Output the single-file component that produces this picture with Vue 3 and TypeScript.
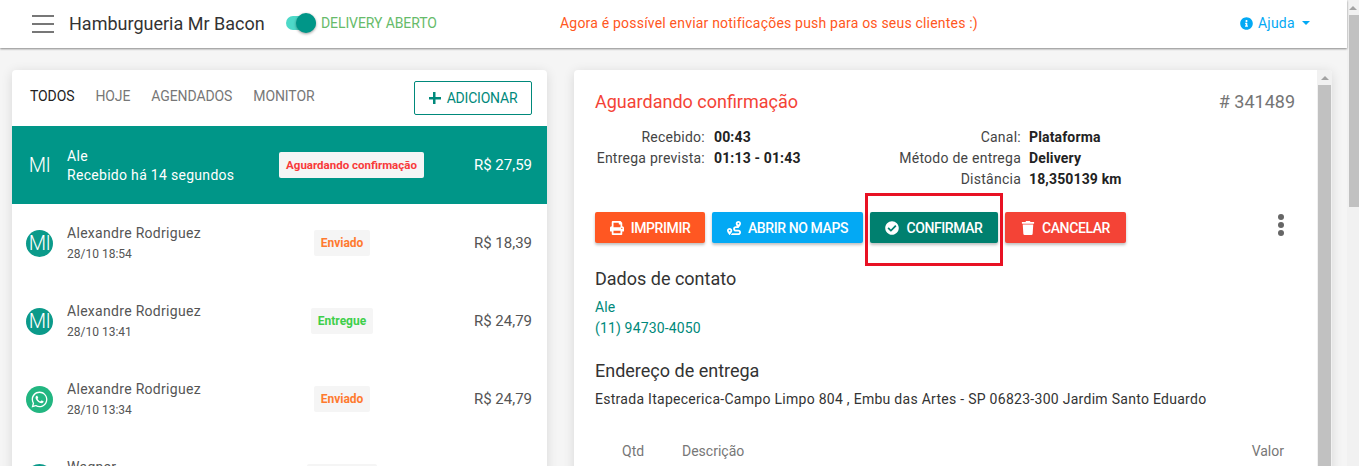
<script setup lang="ts">
interface Pedido {
  nome: string
  info: string
  status: string
  cor: string
  valor: string
  origem: 'mi' | 'whatsapp'
}

const tabs = ['TODOS', 'HOJE', 'AGENDADOS', 'MONITOR']

const pedidos: Pedido[] = [
  { nome: 'Alexandre Rodriguez', info: '28/10 18:54', status: 'Enviado', cor: '#ff7a2f', valor: 'R$ 18,39', origem: 'mi' },
  { nome: 'Alexandre Rodriguez', info: '28/10 13:41', status: 'Entregue', cor: '#3ecf4a', valor: 'R$ 24,79', origem: 'mi' },
  { nome: 'Alexandre Rodriguez', info: '28/10 13:34', status: 'Enviado', cor: '#ff7a2f', valor: 'R$ 24,79', origem: 'whatsapp' },
  { nome: 'Wagner', info: '28/10 13:20', status: 'Cancelado', cor: '#f44336', valor: 'R$ 31,90', origem: 'mi' },
]

const whatsapp = 'M12.04 2C6.58 2 2.13 6.45 2.13 11.91C2.13 13.66 2.59 15.36 3.45 16.86L2.05 22L7.3 20.62C8.75 21.41 10.38 21.83 12.04 21.83C17.5 21.83 21.95 17.38 21.95 11.92C21.95 9.27 20.92 6.78 19.05 4.91C17.18 3.03 14.69 2 12.04 2M12.05 3.67C14.25 3.67 16.31 4.53 17.87 6.09C19.42 7.65 20.28 9.72 20.28 11.92C20.28 16.46 16.58 20.15 12.04 20.15C10.56 20.15 9.11 19.76 7.85 19L7.55 18.83L4.43 19.65L5.26 16.61L5.06 16.29C4.24 15 3.8 13.47 3.8 11.91C3.81 7.37 7.5 3.67 12.05 3.67M8.53 7.33C8.37 7.33 8.1 7.39 7.87 7.64C7.65 7.89 7 8.5 7 9.71C7 10.93 7.89 12.1 8 12.27C8.14 12.44 9.76 14.94 12.25 16C12.84 16.27 13.3 16.42 13.66 16.53C14.25 16.72 14.79 16.69 15.22 16.63C15.7 16.56 16.68 16.03 16.89 15.45C17.1 14.87 17.1 14.38 17.04 14.27C16.97 14.17 16.81 14.11 16.56 14C16.31 13.86 15.09 13.26 14.87 13.18C14.64 13.1 14.5 13.06 14.31 13.3C14.15 13.55 13.67 14.11 13.53 14.27C13.38 14.44 13.24 14.46 13 14.34C12.74 14.21 11.94 13.95 11 13.11C10.26 12.45 9.77 11.64 9.62 11.39C9.5 11.15 9.61 11 9.73 10.89C9.84 10.78 10 10.6 10.1 10.45C10.23 10.31 10.27 10.2 10.35 10.04C10.43 9.87 10.39 9.73 10.33 9.61C10.27 9.5 9.77 8.26 9.56 7.77C9.36 7.29 9.16 7.35 9 7.34C8.86 7.34 8.7 7.33 8.53 7.33Z'
</script>

<template>
  <div class="app">
    <div class="page">
      <header class="topbar">
        <div class="burger"><span></span><span></span><span></span></div>
        <div class="store">Hamburgueria Mr Bacon</div>
        <div class="switch"><span class="switch-thumb"></span></div>
        <div class="delivery">DELIVERY ABERTO</div>
        <div class="notice">Agora é possível enviar notificações push para os seus clientes :)</div>
        <div class="help">
          <svg class="help-icon" viewBox="0 0 512 512"><path fill="currentColor" d="M256 8C119.043 8 8 119.083 8 256c0 136.997 111.043 248 248 248s248-111.003 248-248C504 119.083 392.957 8 256 8zm0 110c23.196 0 42 18.804 42 42s-18.804 42-42 42-42-18.804-42-42 18.804-42 42-42zm56 254c0 6.627-5.373 12-12 12h-88c-6.627 0-12-5.373-12-12v-24c0-6.627 5.373-12 12-12h12v-64h-12c-6.627 0-12-5.373-12-12v-24c0-6.627 5.373-12 12-12h64c6.627 0 12 5.373 12 12v100h12c6.627 0 12 5.373 12 12v24z"/></svg>
          <span>Ajuda</span>
          <span class="caret"></span>
        </div>
      </header>

      <main class="content">
        <section class="card list">
          <div class="tabs">
            <span v-for="(t, i) in tabs" :key="t" class="tab" :class="{ active: i === 0 }">{{ t }}</span>
            <button class="add"><span class="plus"></span>ADICIONAR</button>
          </div>

          <div class="row selected">
            <div class="avatar plain">MI</div>
            <div class="who">
              <div class="name">Ale</div>
              <div class="when">Recebido há 14 segundos</div>
            </div>
            <div class="status"><span class="badge waiting">Aguardando confirmação</span></div>
            <div class="price">R$ 27,59</div>
          </div>

          <div v-for="p in pedidos" :key="p.info" class="row">
            <div v-if="p.origem === 'mi'" class="avatar">MI</div>
            <div v-else class="avatar wa">
              <svg viewBox="0 0 24 24" width="19" height="19"><path fill="#fff" :d="whatsapp"/></svg>
            </div>
            <div class="who">
              <div class="name">{{ p.nome }}</div>
              <div class="date">{{ p.info }}</div>
            </div>
            <div class="status"><span class="badge" :style="{ color: p.cor }">{{ p.status }}</span></div>
            <div class="price">{{ p.valor }}</div>
          </div>
        </section>

        <section class="card detail">
          <div class="detail-body">
            <div class="detail-head">
              <div class="state">Aguardando confirmação</div>
              <div class="number"># 341489</div>
            </div>

            <div class="facts">
              <dl class="facts-col left">
                <dt>Recebido:</dt><dd>00:43</dd>
                <dt>Entrega prevista:</dt><dd>01:13 - 01:43</dd>
              </dl>
              <dl class="facts-col right">
                <dt>Canal:</dt><dd>Plataforma</dd>
                <dt>Método de entrega</dt><dd>Delivery</dd>
                <dt>Distância</dt><dd>18,350139 km</dd>
              </dl>
            </div>

            <div class="actions">
              <button class="btn orange">
                <svg viewBox="0 0 512 512"><path fill="currentColor" d="M448 192V77.25c0-8.49-3.37-16.62-9.37-22.63L393.37 9.37c-6-6-14.14-9.37-22.63-9.37H96C78.33 0 64 14.33 64 32v160c-35.35 0-64 28.65-64 64v112c0 8.84 7.16 16 16 16h48v96c0 17.67 14.33 32 32 32h320c17.67 0 32-14.33 32-32v-96h48c8.84 0 16-7.16 16-16V256c0-35.35-28.65-64-64-64zm-64 256H128v-96h256v96zm0-224H128V64h192v48c0 8.84 7.16 16 16 16h48v96zm48 72c-13.25 0-24-10.75-24-24 0-13.26 10.75-24 24-24s24 10.74 24 24c0 13.25-10.75 24-24 24z"/></svg>
                IMPRIMIR
              </button>
              <button class="btn blue">
                <svg viewBox="0 0 512 512"><path fill="currentColor" d="M416 320h-96c-17.6 0-32-14.4-32-32s14.4-32 32-32h96s96-107 96-160-43-96-96-96-96 43-96 96c0 25.5 22.2 63.4 45.3 96H320c-52.9 0-96 43.1-96 96s43.1 96 96 96h96c17.6 0 32 14.4 32 32s-14.4 32-32 32H185.5c-16 24.8-33.8 47.7-47.3 64H416c52.9 0 96-43.1 96-96s-43.1-96-96-96zm0-256c17.7 0 32 14.3 32 32s-14.3 32-32 32-32-14.3-32-32 14.3-32 32-32zM96 256c-53 0-96 43-96 96s96 160 96 160 96-107 96-160-43-96-96-96zm0 128c-17.7 0-32-14.3-32-32s14.3-32 32-32 32 14.3 32 32-14.3 32-32 32z"/></svg>
                ABRIR NO MAPS
              </button>
              <div class="marked">
                <button class="btn teal">
                  <svg viewBox="0 0 512 512"><path fill="currentColor" d="M504 256c0 136.967-111.033 248-248 248S8 392.967 8 256 119.033 8 256 8s248 111.033 248 248zM227.314 387.314l184-184c6.248-6.248 6.248-16.379 0-22.627l-22.627-22.627c-6.248-6.249-16.379-6.249-22.628 0L216 308.118l-70.059-70.059c-6.248-6.248-16.379-6.248-22.628 0l-22.627 22.627c-6.248 6.248-6.248 16.379 0 22.627l104 104c6.249 6.249 16.379 6.249 22.628.001z"/></svg>
                  CONFIRMAR
                </button>
                <span class="marker"></span>
              </div>
              <button class="btn red">
                <svg viewBox="0 0 448 512"><path fill="currentColor" d="M432 32H312l-9.4-18.7A24 24 0 0 0 281.1 0H166.8a23.72 23.72 0 0 0-21.4 13.3L136 32H16A16 16 0 0 0 0 48v32a16 16 0 0 0 16 16h416a16 16 0 0 0 16-16V48a16 16 0 0 0-16-16zM53.2 467a48 48 0 0 0 47.9 45h245.8a48 48 0 0 0 47.9-45L416 128H32z"/></svg>
                CANCELAR
              </button>
              <div class="more"><span></span><span></span><span></span></div>
            </div>

            <h3 class="title">Dados de contato</h3>
            <div class="contact">Ale</div>
            <div class="contact">(11) 94730-4050</div>

            <h3 class="title address-title">Endereço de entrega</h3>
            <div class="address">Estrada Itapecerica-Campo Limpo 804 , Embu das Artes - SP 06823-300 Jardim Santo Eduardo</div>

            <div class="items">
              <span class="qtd">Qtd</span>
              <span class="desc">Descrição</span>
              <span class="val">Valor</span>
            </div>
          </div>
          <div class="inner-scroll"><span class="arrow"></span><span class="thumb"></span></div>
        </section>
      </main>
    </div>
    <div class="page-scroll"><span class="arrow"></span><span class="thumb"></span></div>
  </div>
</template>

<style>
html, body {
  margin: 0;
  overflow: hidden;
}
</style>

<style scoped>
.app {
  display: flex;
  height: 466px;
  overflow: hidden;
  background: #f5f5f5;
  font-family: Roboto, "Liberation Sans", sans-serif;
  font-size: 14px;
  color: #333;
}

.page {
  flex: 1;
  min-width: 0;
}

.topbar {
  box-sizing: border-box;
  height: 48px;
  display: flex;
  align-items: center;
  background: #fff;
  box-shadow: 0 1px 2px rgba(0, 0, 0, 0.45);
  position: relative;
  padding: 0 0 2px 32px;
}

.burger {
  width: 22px;
  height: 18px;
  display: flex;
  flex-direction: column;
  justify-content: space-between;
  margin: 2px 15px 0 0;
}

.burger span {
  height: 2px;
  background: #777;
}

.store {
  font-size: 18px;
  color: #333;
  width: 217px;
}

.switch {
  width: 30px;
  height: 14px;
  background: #4dd9c8;
  border-radius: 7px;
  position: relative;
}

.switch-thumb {
  position: absolute;
  right: 0;
  top: -3px;
  width: 20px;
  height: 20px;
  border-radius: 50%;
  background: #009688;
  box-shadow: 0 1px 3px rgba(0, 0, 0, 0.4);
}

.delivery {
  color: #66bb6a;
  margin-left: 5px;
  width: 239px;
  letter-spacing: -0.1px;
}

.notice {
  color: #ff5722;
  width: 680px;
  letter-spacing: 0.2px;
}

.help {
  display: flex;
  align-items: center;
  color: #03a9f4;
  letter-spacing: 0.2px;
}

.help-icon {
  width: 13px;
  height: 13px;
  margin-right: 5px;
}

.caret {
  margin-left: 7px;
  border-left: 4.5px solid transparent;
  border-right: 4.5px solid transparent;
  border-top: 4.5px solid #03a9f4;
}

.content {
  display: flex;
  gap: 27px;
  padding: 22px 15px 0 12px;
  align-items: flex-start;
}

.card {
  background: #fff;
  border-radius: 4px;
  box-shadow: 0 2px 12px rgba(0, 0, 0, 0.12);
  height: 440px;
  overflow: hidden;
}

.list {
  width: 535px;
  flex: none;
}

.tabs {
  height: 56px;
  display: flex;
  align-items: center;
  padding: 0 15px 0 18px;
  gap: 21px;
}

.tab {
  color: #777;
  position: relative;
  top: -2px;
  letter-spacing: -0.1px;
}

.tab.active {
  color: #222;
}

.add {
  margin-left: auto;
  width: 118px;
  height: 34px;
  border: 1px solid #00897b;
  border-radius: 2px;
  background: #fff;
  color: #00897b;
  font: inherit;
  letter-spacing: -0.2px;
  display: flex;
  align-items: center;
  justify-content: center;
  padding: 0;
}

.plus {
  width: 12px;
  height: 12px;
  margin-right: 6px;
  background:
    linear-gradient(#00897b, #00897b) center / 100% 2.5px no-repeat,
    linear-gradient(#00897b, #00897b) center / 2.5px 100% no-repeat;
}

.row {
  height: 78px;
  display: grid;
  grid-template-columns: 43px 200px 150px 115px;
  padding: 0 15px 0 12px;
  align-items: center;
  color: #555;
}

.row.selected {
  background: #009688;
  color: #fff;
}

.avatar {
  width: 27px;
  height: 27px;
  margin-left: 2px;
  border-radius: 50%;
  background: #0b9a8a;
  color: #fff;
  font-size: 20px;
  font-weight: 300;
  display: flex;
  align-items: center;
  justify-content: center;
  letter-spacing: -0.5px;
}

.avatar.plain {
  background: transparent;
}

.avatar.wa {
  background: #22b681;
}

.name {
  line-height: 20px;
  letter-spacing: 0.3px;
}

.when {
  line-height: 18px;
  letter-spacing: 0.3px;
}

.date {
  font-size: 12px;
  line-height: 20px;
  margin-top: 1px;
}

.status {
  text-align: center;
  white-space: nowrap;
}

.badge {
  display: inline-block;
  background: #f5f5f5;
  border-radius: 2px;
  font-size: 12px;
  font-weight: 700;
  line-height: 26px;
  padding: 0 7px;
}

.badge.waiting {
  display: block;
  width: 145px;
  box-sizing: border-box;
  margin-left: 12px;
  padding: 0;
  font-size: 11.5px;
  color: #f83a3a;
}

.price {
  text-align: right;
  font-size: 15px;
}

.detail {
  width: 758px;
  flex: none;
  display: flex;
}

.detail-body {
  flex: 1;
  min-width: 0;
  padding: 20px 22px 0 21px;
}

.detail-head {
  display: flex;
  justify-content: space-between;
  font-size: 18px;
  line-height: 24px;
}

.state {
  color: #f44336;
}

.number {
  color: #757575;
}

.facts {
  display: flex;
  margin-top: 12px;
}

.facts-col {
  margin: 0;
  display: grid;
  grid-auto-rows: 21px;
  align-items: center;
  column-gap: 8px;
}

.facts-col dt {
  text-align: right;
  color: #444;
  letter-spacing: 0.25px;
  white-space: nowrap;
}

.facts-col dd {
  margin: 0;
  font-weight: 700;
  color: #222;
  letter-spacing: 0.15px;
}

.facts-col.left {
  grid-template-columns: 110px 182px;
  column-gap: 9px;
}

.facts-col.right {
  grid-template-columns: 125px auto;
}

.actions {
  display: flex;
  align-items: center;
  gap: 7px;
  margin-top: 23px;
}

.btn {
  height: 31px;
  border: 0;
  border-radius: 2px;
  color: #fff;
  font: inherit;
  font-weight: 500;
  letter-spacing: -0.4px;
  display: flex;
  align-items: center;
  justify-content: center;
  padding: 0;
  box-shadow: 0 2px 3px rgba(0, 0, 0, 0.25);
}

.btn svg {
  width: 14px;
  height: 14px;
  margin-right: 7px;
}

.orange { background: #ff5722; width: 110px; }
.blue { background: #03a9f4; width: 151px; }
.teal { background: #00806f; width: 128px; }
.red { background: #f44336; width: 121px; }

.marked {
  position: relative;
}

.marker {
  position: absolute;
  left: -5px;
  top: -19px;
  width: 132px;
  height: 67px;
  border: 3px solid #e81123;
  pointer-events: none;
}

.more {
  margin: 0 11px 6px auto;
  display: flex;
  flex-direction: column;
  gap: 2px;
}

.more span {
  width: 6px;
  height: 6px;
  border-radius: 50%;
  background: #666;
}

.title {
  margin: 24px 0 0;
  font-size: 18px;
  font-weight: 400;
  line-height: 24px;
  color: #333;
}

.contact {
  color: #00897b;
  line-height: 21px;
  letter-spacing: 0.15px;
}

.title:not(.address-title) + .contact {
  margin-top: 6px;
}

.address-title {
  margin-top: 20px;
}

.address {
  margin-top: 6px;
  line-height: 20px;
  letter-spacing: 0.28px;
}

.items {
  margin-top: 34px;
  display: flex;
  color: #777;
  padding: 0 11px 0 27px;
}

.qtd { width: 60px; }
.desc { flex: 1; }

.inner-scroll,
.page-scroll {
  flex: none;
  display: flex;
  flex-direction: column;
  align-items: center;
  background: #f1f1f1;
}

.inner-scroll {
  width: 15px;
}

.page-scroll {
  width: 12px;
}

.arrow {
  flex: none;
  margin: 6px 0 5px;
  border-left: 4px solid transparent;
  border-right: 4px solid transparent;
  border-bottom: 4px solid #a3a3a3;
}

.thumb {
  display: block;
  background: #c1c1c1;
  width: 100%;
}

.inner-scroll .thumb {
  flex: 1;
  width: 13px;
}

.page-scroll .thumb {
  height: 192px;
  margin-left: 2px;
  width: 10px;
}
</style>
